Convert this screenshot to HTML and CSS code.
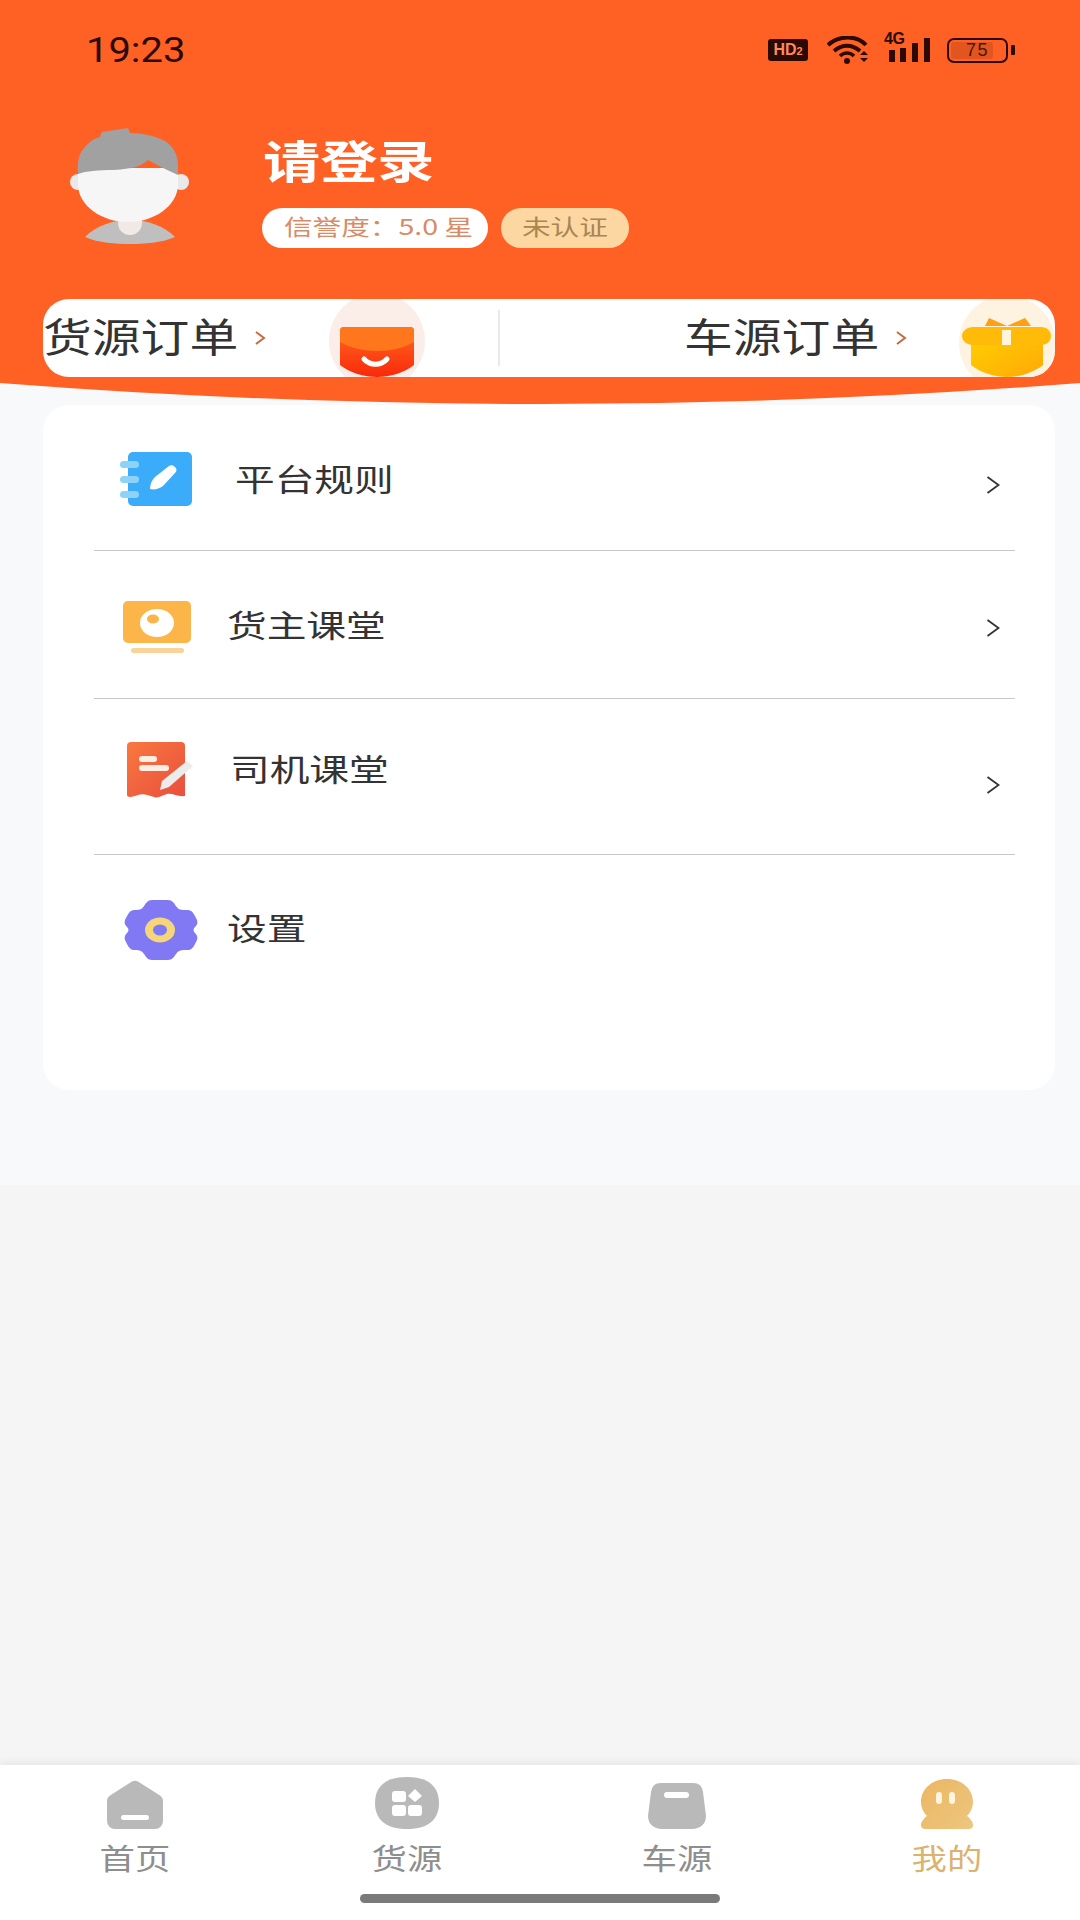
FILE: index.html
```html
<!DOCTYPE html>
<html lang="zh-CN">
<head>
<meta charset="utf-8">
<title>我的</title>
<link rel="stylesheet" href="styles.css">
</head>
<body>
<div class="app">
  <header class="hero">
    <div class="status">
      <span class="time">19:23</span>
      <div class="status-icons">
        <span class="hd">HD<small>2</small></span>
        <svg class="wifi" viewBox="0 0 44 28" width="44" height="28"><path d="M1 9C12-1 30-1 39 9" fill="none" stroke="#2a0a02" stroke-width="4"/><path d="M7 15C15 8 25 8 33 15" fill="none" stroke="#2a0a02" stroke-width="4"/><path d="M13 20C17 16 23 16 27 20" fill="none" stroke="#2a0a02" stroke-width="3.5"/><circle cx="20" cy="25" r="3" fill="#2a0a02"/><path d="M33 19l4-4 4 4zM33 22h8l-4 4z" fill="#2a0a02"/></svg>
        <div class="signal">
          <span class="net">4G</span>
          <svg viewBox="0 0 44 24" width="44" height="24"><rect x="3" y="12" width="6" height="12" fill="#2a0a02"/><rect x="14" y="10" width="6" height="14" fill="#2a0a02"/><rect x="26" y="5" width="6" height="19" fill="#2a0a02"/><rect x="38" y="0" width="6" height="24" fill="#2a0a02"/></svg>
        </div>
        <div class="battery"><span class="battery-fill"></span><span class="battery-num">75</span></div>
      </div>
    </div>

    <div class="profile">
      <svg class="avatar" viewBox="0 0 120 116" width="120" height="116">
        <path d="M15 109C26 98 42 92 60 92s34 6 45 17c-14 6-30 7-45 7s-31-1-45-7z" fill="#bfbfbf"/>
        <circle cx="60" cy="95" r="12" fill="#f1e9e6"/>
        <circle cx="8" cy="54" r="8" fill="#e9e9e9"/>
        <circle cx="111" cy="54" r="8" fill="#e9e9e9"/>
        <path d="M8 40H108V56C108 78 84 94 58 94S8 78 8 56z" fill="#f6f6f6"/>
        <path d="M8 46C7 30 10 24 16 18 20 13 25 10 30 9l2-5 26-4 2 5c12 0 26 3 35 8 9 6 13 14 13 25v9L93 40 78 32C72 38 62 41 44 42 28 42 16 43 8 46z" fill="#a1a1a1"/>
      </svg>
      <div class="who">
        <h1 class="login"><span class="login-text">请登录</span></h1>
        <div class="badges">
          <span class="badge badge-rep"><span class="badge-text">信誉度：5.0 星</span></span>
          <span class="badge badge-auth"><span class="badge-text">未认证</span></span>
        </div>
      </div>
    </div>

    <nav class="orders">
      <div class="order order-goods">
        <span class="order-name">货源订单</span>
        <svg class="order-arrow" viewBox="0 0 12 16" width="12" height="16"><path d="M2 2l8 6-8 6" fill="none" stroke="#c8693c" stroke-width="2"/></svg>
        <svg class="order-icon" viewBox="0 0 96 78" width="96" height="78">
          <defs><linearGradient id="ga" x1="0" y1="0" x2="0" y2="1"><stop offset="0" stop-color="#ff6a1e"/><stop offset="1" stop-color="#f9290b"/></linearGradient></defs>
          <circle cx="48" cy="42" r="48" fill="#fbeee8"/>
          <path d="M11 32a4 4 0 0 1 4-4h66a4 4 0 0 1 4 4v34c-10 8-24 12-37 12s-27-4-37-12z" fill="url(#ga)"/>
          <path d="M11 32a4 4 0 0 1 4-4h66a4 4 0 0 1 4 4v11c-10 6-24 9-37 9s-27-3-37-9z" fill="#ff761d"/>
          <path d="M35 60c6 7 17 7 23 0" fill="none" stroke="#fff" stroke-width="5" stroke-linecap="round"/>
        </svg>
      </div>
      <span class="order-sep"></span>
      <div class="order order-trucks">
        <span class="order-name">车源订单</span>
        <svg class="order-arrow" viewBox="0 0 12 16" width="12" height="16"><path d="M2 2l8 6-8 6" fill="none" stroke="#c8693c" stroke-width="2"/></svg>
        <svg class="order-icon" viewBox="0 0 96 78" width="96" height="78">
          <defs><linearGradient id="gb" x1="0" y1="0" x2="1" y2="1"><stop offset="0" stop-color="#ffd000"/><stop offset="1" stop-color="#ffa808"/></linearGradient></defs>
          <circle cx="48" cy="44" r="48" fill="#fdf3e0"/>
          <path d="M26 27l4-8 18 8 18-8 6 8z" fill="#ff9f12"/>
          <path d="M12 36h72v30c-10 8-24 12-36 12s-26-4-36-12z" fill="url(#gb)"/>
          <path d="M14 28H82c6 0 10 4 10 9s-4 9-10 9H14C8 46 3 42 3 37s5-9 11-9z" fill="#ffbb08"/>
          <rect x="43" y="31" width="9" height="15" fill="#fff4dc"/>
        </svg>
      </div>
    </nav>
  </header>
  <svg class="curve" viewBox="0 0 1080 22" width="1080" height="22" preserveAspectRatio="none"><path d="M0 0H1080Q540 42 0 0z" fill="#ff6124"/></svg>

  <main class="upper">
    <section class="menu">
      <a class="row row-1">
        <svg class="row-icon" viewBox="0 0 74 56" width="74" height="56">
          <rect x="9" y="1" width="64" height="54" rx="5" fill="#3bacf9"/>
          <rect x="1" y="10" width="19" height="7" rx="3.5" fill="#8ed2f8"/>
          <rect x="1" y="25" width="19" height="7" rx="3.5" fill="#8ed2f8"/>
          <rect x="1" y="40" width="19" height="7" rx="3.5" fill="#8ed2f8"/>
          <path d="M31 38c0-5 2-9 5-12l14-11c2-1 4-1 6 1s2 4 0 6L44 35c-4 3-9 4-13 3z" fill="#fff"/>
        </svg>
        <span class="row-label">平台规则</span>
        <svg class="chev" viewBox="0 0 14 20" width="14" height="20"><path d="M1.5 2l11 8-11 8" fill="none" stroke="#333" stroke-width="1.8"/></svg>
      </a>
      <a class="row row-2">
        <svg class="row-icon" viewBox="0 0 70 54" width="70" height="54">
          <rect x="1" y="0" width="68" height="42" rx="5" fill="#fbb548"/>
          <ellipse cx="35" cy="22" rx="17" ry="14" fill="#fff"/>
          <ellipse cx="31" cy="18" rx="6" ry="4.5" fill="#fbb548"/>
          <rect x="9" y="47" width="53" height="5" rx="2.5" fill="#fbd29a"/>
        </svg>
        <span class="row-label">货主课堂</span>
        <svg class="chev" viewBox="0 0 14 20" width="14" height="20"><path d="M1.5 2l11 8-11 8" fill="none" stroke="#333" stroke-width="1.8"/></svg>
      </a>
      <a class="row row-3">
        <svg class="row-icon" viewBox="0 0 66 56" width="66" height="56">
          <defs><linearGradient id="gc" x1="0" y1="0" x2="1" y2="1"><stop offset="0" stop-color="#f9783f"/><stop offset="1" stop-color="#e84f3d"/></linearGradient></defs>
          <path d="M0 4a4 4 0 0 1 4-4h50a4 4 0 0 1 4 4v50c-8 1-12-3-18-2-5 1-8 5-13 3-6-2-11-4-16-2-5 2-11 3-11 0z" fill="url(#gc)"/>
          <rect x="12" y="14" width="18" height="6" rx="3" fill="#fdeee4"/>
          <rect x="12" y="23" width="30" height="6" rx="3" fill="#fdeee4"/>
          <path d="M33 48l2-9 25-20 6 5-24 21z" fill="#ececec"/>
        </svg>
        <span class="row-label">司机课堂</span>
        <svg class="chev" viewBox="0 0 14 20" width="14" height="20"><path d="M1.5 2l11 8-11 8" fill="none" stroke="#333" stroke-width="1.8"/></svg>
      </a>
      <a class="row row-4">
        <svg class="row-icon" viewBox="0 0 74 62" width="74" height="62">
          <path d="M28 1H44C48 1 50 4 52 7 54 10 56 11 60 11H64C67 11 69 13 71 17L73 21C74 24 73 26 71 28 69 30 69 32 71 34 73 36 74 38 73 41L71 45C69 49 67 51 64 51H60C56 51 54 52 52 55 50 58 48 61 44 61H28C24 61 22 58 20 55 18 52 16 51 12 51H10C7 51 5 49 3 45L1 41C0 38 1 36 3 34 5 32 5 30 3 28 1 26 0 24 1 21L3 17C5 13 7 11 10 11H12C16 11 18 10 20 7 22 4 24 1 28 1Z" fill="#8179f4"/>
          <ellipse cx="36" cy="31" rx="15" ry="12.5" fill="#f5d67a"/>
          <ellipse cx="36" cy="31" rx="7" ry="5.5" fill="#8179f4"/>
        </svg>
        <span class="row-label">设置</span>
      </a>
    </section>
  </main>
  <div class="lower"></div>

  <footer class="tabbar">
    <a class="tab">
      <svg viewBox="0 0 58 50" width="58" height="50"><path d="M26 1.500a6 6 0 0 1 6 0l22 14a7 7 0 0 1 3 6V41a8 8 0 0 1-8 8H9a8 8 0 0 1-8-8V21.500a7 7 0 0 1 3-6z" fill="#b9b9b9"/><rect x="15" y="35" width="28" height="5" rx="2.500" fill="#fff"/></svg>
      <span class="tab-label">首页</span>
    </a>
    <a class="tab">
      <svg viewBox="0 0 66 54" width="66" height="54"><path d="M33 1c22 0 32 10 32 26S55 53 33 53 1 43 1 27 11 1 33 1z" fill="#b9b9b9"/><rect x="18" y="15" width="14" height="11" rx="3" fill="#fff"/><rect x="18" y="29" width="14" height="11" rx="3" fill="#fff"/><rect x="34" y="29" width="14" height="11" rx="3" fill="#fff"/><path d="M41 13l7 7-7 6-7-6z" fill="#fff"/></svg>
      <span class="tab-label">货源</span>
    </a>
    <a class="tab">
      <svg viewBox="0 0 60 48" width="60" height="48"><path d="M14 1h32c6 0 9 3 10 9l3 24c0 8-6 13-14 13H15C7 47 1 42 1 34l3-24c1-6 4-9 10-9z" fill="#b9b9b9"/><rect x="17" y="10" width="25" height="6" rx="3" fill="#fff"/></svg>
      <span class="tab-label">车源</span>
    </a>
    <a class="tab tab-on">
      <svg viewBox="0 0 54 52" width="54" height="52"><defs><linearGradient id="gd" x1="0" y1="0" x2="1" y2="1"><stop offset="0" stop-color="#ebb762"/><stop offset="1" stop-color="#edc67f"/></linearGradient></defs><path d="M27 1c15 0 26 10 26 23 0 6-3 11-6 14 3 2 6 6 6 9s-2 4-5 4H6c-3 0-5-1-5-4s3-7 6-9C4 35 1 30 1 24 1 11 12 1 27 1z" fill="url(#gd)"/><rect x="16" y="14" width="6" height="12" rx="3" fill="#fff4df"/><rect x="29" y="14" width="6" height="12" rx="3" fill="#fff4df"/></svg>
      <span class="tab-label">我的</span>
    </a>
    <span class="home-bar"></span>
  </footer>
</div>
</body>
</html>
```

FILE: styles.css
```css
* { box-sizing: border-box; }
html, body { margin: 0; padding: 0; }
body {
  width: 1080px;
  height: 1920px;
  overflow: hidden;
  font-family: "Noto Sans CJK SC", "Noto Sans", sans-serif;
  background: #f5f5f6;
}
.app { display: flex; flex-direction: column; width: 1080px; height: 1920px; }

.hero { height: 383px; background: #ff6124; flex: none; }
.curve { display: block; flex: none; height: 22px; background: #f8f9fb; }

.status {
  height: 100px;
  display: flex;
  align-items: center;
  justify-content: space-between;
  padding: 0 72px 0 86px;
}
.time {
  display: inline-block;
  font-family: Roboto, sans-serif;
  font-weight: 400;
  font-size: 35px;
  color: #2a0a02;
  transform: scaleX(1.14);
  transform-origin: left center;
}
.status-icons { display: flex; align-items: center; }
.hd {
  width: 40px; height: 22px;
  background: #2a0a02;
  color: #ff8a58;
  border-radius: 3px;
  font: 700 16px/22px "Liberation Sans", sans-serif;
  text-align: center;
}
.hd small { font-size: 11px; }
.wifi { margin-left: 19px; }
.signal { position: relative; margin-left: 13px; width: 46px; height: 24px; }
.signal svg { position: absolute; right: 0; top: 0; }
.net {
  position: absolute; left: 0; top: -7px;
  font: 700 16px/16px "Liberation Sans", sans-serif;
  letter-spacing: -0.5px;
  color: #2a0a02;
  background: #ff6124;
}
.battery {
  position: relative;
  margin-left: 17px;
  width: 61px; height: 25px;
  border: 2.5px solid #2a0a02;
  border-radius: 7px;
  display: flex;
  align-items: center;
  justify-content: center;
}
.battery::after {
  content: "";
  position: absolute;
  right: -9px; top: 5px;
  width: 4px; height: 10px;
  background: #2a0a02;
  border-radius: 1px;
}
.battery-fill {
  position: absolute; left: 2px; top: 2px; bottom: 2px;
  width: 42px;
  background: #e2551f;
  border-radius: 3px;
}
.battery-num {
  position: relative;
  font: 400 18px/1 "Liberation Sans", sans-serif;
  letter-spacing: 1.5px;
  color: #4a1606;
}

.profile { height: 171px; margin-top: 28px; padding-left: 70px; display: flex; align-items: flex-start; }
.avatar { flex: none; }
.who { margin-left: 73px; padding-top: 8px; }
.login { margin: 0; height: 48px; font-size: 45px; line-height: 48px; font-weight: 700; color: #fff; }
.login-text { display: inline-block; transform: scaleX(1.27); transform-origin: left center; }
.badges { display: flex; margin-top: 24px; margin-left: -1px; }
.badge {
  height: 40px;
  border-radius: 20px;
  font-size: 22px;
  line-height: 35px;
}
.badge-text { display: inline-block; transform: scaleX(1.3); transform-origin: left center; white-space: nowrap; }
.badge-rep { width: 226px; padding-left: 22px; background: #fff; color: #d98a66; }
.badge-auth { width: 128px; margin-left: 13px; padding-left: 21px; background: #fdd7a2; color: #a98552; }

.orders {
  margin: 0 25px 0 43px;
  height: 78px;
  background: #fff;
  border-radius: 26px;
  display: flex;
  align-items: center;
  overflow: hidden;
}
.order { display: flex; align-items: center; height: 78px; flex: none; }
.order-goods { width: 455px; }
.order-sep { width: 2px; height: 56px; background: #e9e9e9; flex: none; }
.order-trucks { flex: 1; padding-left: 184px; }
.order-name {
  width: 160px;
  font-size: 40px;
  line-height: 72px;
  height: 78px;
  color: #333;
  white-space: nowrap;
  transform: scaleX(1.22);
  transform-origin: left center;
  flex: none;
}
.order-arrow { flex: none; margin-left: 51px; }
.order-icon { flex: none; display: block; }
.order-goods .order-icon { margin-left: 63px; }
.order-trucks .order-icon { margin-left: 52px; }

.upper { flex: none; height: 780px; background: #f8f9fb; padding: 0 25px 0 43px; }
.lower { flex: 1; background: #f5f5f6; }

.menu { height: 685px; background: #fff; border-radius: 26px; padding: 1px 40px 0 51px; }
.row { display: flex; align-items: flex-start; color: #333; border-bottom: 1px solid #c8c8c8; }
.row-icon { flex: none; display: block; }
.row-label {
  width: 124px;
  font-size: 31px;
  line-height: 40px;
  white-space: nowrap;
  transform: scaleX(1.28);
  transform-origin: left center;
  flex: none;
}
.chev { flex: none; margin-left: auto; margin-right: 15px; }

.row-1 { height: 145px; padding-top: 45px; }
.row-1 .row-icon { margin-left: 25px; }
.row-1 .row-label { margin: 7px 0 0 42px; }
.row-1 .chev { margin-top: 24px; }

.row-2 { height: 148px; padding-top: 50px; }
.row-2 .row-icon { margin-left: 28px; }
.row-2 .row-label { margin: 3px 0 0 35px; }
.row-2 .chev { margin-top: 17px; }

.row-3 { height: 156px; padding-top: 43px; }
.row-3 .row-icon { margin-left: 33px; }
.row-3 .row-label { margin: 6px 0 0 37px; }
.row-3 .chev { margin-top: 33px; }

.row-4 { border-bottom: 0; padding-top: 44px; }
.row-4 .row-icon { margin-left: 30px; }
.row-4 .row-label { margin: 8px 0 0 29px; }

.tabbar {
  position: relative;
  flex: none;
  height: 155px;
  background: #fff;
  box-shadow: 0 -3px 8px rgba(0, 0, 0, .06);
  display: grid;
  grid-template-columns: 270px 274px 266px 270px;
}
.tab {
  height: 109px;
  display: flex;
  flex-direction: column;
  align-items: center;
  justify-content: flex-end;
  color: #8e8e8e;
}
.tab svg { display: block; flex: none; }
.tab-label {
  width: 58px;
  margin-top: 10px;
  font-size: 29px;
  line-height: 34px;
  white-space: nowrap;
  transform: scaleX(1.22);
  transform-origin: center;
  flex: none;
}
.tab-on { color: #dcb26f; padding-left: 4px; }
.home-bar {
  position: absolute;
  left: 360px; top: 129px;
  width: 360px; height: 9px;
  border-radius: 5px;
  background: #7a7a7a;
}
```
